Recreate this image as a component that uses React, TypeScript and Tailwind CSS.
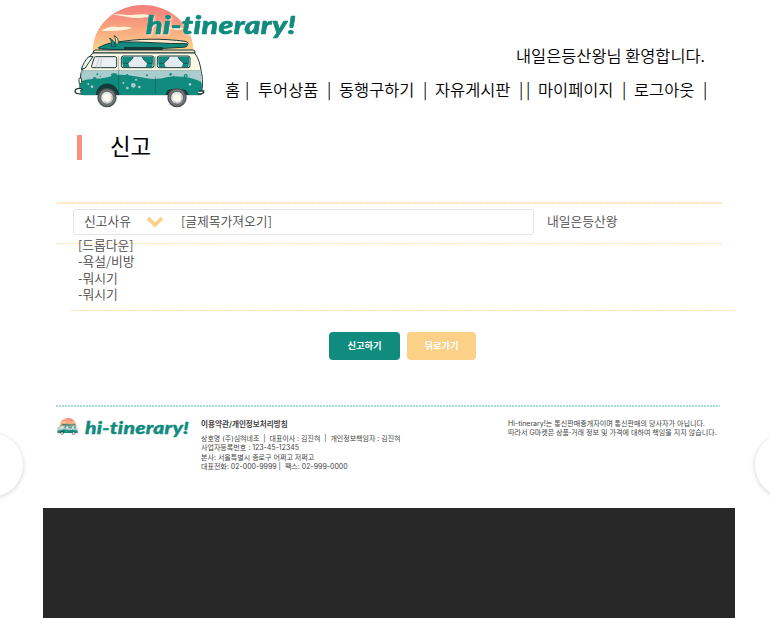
import type { ReactNode } from "react";

function Van({ className }: { className: string }) {
  return (
    <svg className={className} viewBox="0 0 420 336" aria-hidden="true">
      <defs>
        <linearGradient id="sunset" x1="0" y1="0" x2="0" y2="1">
          <stop offset="0" stopColor="#f47c7c" />
          <stop offset="0.5" stopColor="#f8a480" />
          <stop offset="1" stopColor="#fcd48a" />
        </linearGradient>
      </defs>
      <path d="M68 152a151 137 0 0 1 302 0z" fill="url(#sunset)" />
      <path d="M128 43c20-4 38 4 58 2s38-4 56 3c-24 8-50 7-72 3-14-3-28-4-42-8zM92 92c18-8 30-14 46-12 18 2 30-2 48 4-28 10-60 10-94 8zM290 82c18 2 36-2 52 4-14 6-40 4-52-4z" fill="#fff3d6" />
      <path d="M140 127c60-12 140-12 205-3 14 3 11 12-4 14-80 5-140 5-201 0z" fill="#fae8c8" stroke="#173b3a" strokeWidth="3" />
      <path d="M85 143c24-12 44-17 70-17 62-2 132 6 195 5 6 7-2 11-14 11-80 5-180 10-249 4z" fill="#108b7e" stroke="#173b3a" strokeWidth="3" />
      <path d="M132 107c10 3 14 13 13 24l-8 2c1-10 0-18-5-26z" fill="#fae8c8" stroke="#173b3a" strokeWidth="2.5" />
      <path d="M118 114c12 4 17 15 19 26h-13c2-10 0-18-6-26z" fill="#108b7e" stroke="#173b3a" strokeWidth="2" />
      <rect x="162" y="141" width="116" height="10" fill="#173b3a" />
      <path d="M76 150H370q6 0 5 9H69q1-9 7-9z" fill="#f6e2c3" stroke="#173b3a" strokeWidth="3" />
      <path d="M69 159H374c12 16 17 36 19 52 6 24 6 50 0 73H38c-9-8-10-27-7-47 0-14 4-25 7-33 6-16 17-31 31-45z" fill="#fff8e7" stroke="#173b3a" strokeWidth="3" />
      <path d="M34 211H392l2 31-4 12H32z" fill="#a9cdcd" />
      <path d="M30 246c22-14 52-5 88-16 31-10 50-5 86 0 29 5 44 10 76 4 41-9 80-3 114 11 4 14 2 28-2 40H38c-7-8-9-22-8-39z" fill="#108b7e" />
      <path d="M34 211H393" stroke="#173b3a" strokeWidth="1.5" opacity=".4" />
      <path d="M56 170c-10 10-18 24-22 38l12-4c6-10 14-21 23-34zM76 170h60q4 0 4 5v22q0 6-6 6H68q-5 0-3-6l7-22q1-5 4-5z" fill="#edf0f2" stroke="#173b3a" strokeWidth="3" />
      <path d="m88 172-9 30m16-30-4 30" stroke="#d2d7dd" strokeWidth="5" />
      {[154, 262].map((x) => (
        <g key={x} transform={`translate(${x} 168)`}>
          <rect width="98" height="35" rx="6" fill="#e4eaf1" stroke="#173b3a" strokeWidth="3" />
          <path d="M3 2h33c-3 10-11 14-16 19l5 12H5q-4-14-2-31zM95 2H62c3 10 11 14 16 19l-5 12h20q4-14 2-31z" fill="#108b7e" />
          <path d="M36 2c-3 10-11 14-16 19M62 2c3 10 11 14 16 19M6 22h15m56 0h15" fill="none" stroke="#173b3a" strokeWidth="2" />
        </g>
      ))}
      <path d="M146 168v114M256 168v38m0 24v50M42 204c-8 11-9 22-10 34" fill="none" stroke="#173b3a" strokeWidth="2" opacity=".5" />
      <g fill="#108b7e">
        <circle cx="74" cy="237" r="6" /><ellipse cx="132" cy="224" rx="9" ry="5" />
        <circle cx="171" cy="226" r="4" /><circle cx="302" cy="223" r="4" />
        <circle cx="311" cy="230" r="3" /><circle cx="347" cy="228" r="6" />
        <circle cx="82" cy="223" r="3" /><circle cx="91" cy="229" r="2" /><circle cx="231" cy="226" r="3" />
      </g>
      <g fill="#a9cdcd">
        <circle cx="190" cy="256" r="7" /><circle cx="172" cy="264" r="4" />
        <circle cx="208" cy="261" r="4" /><circle cx="198" cy="239" r="3" />
        <circle cx="66" cy="260" r="4" /><circle cx="55" cy="252" r="3" />
        <circle cx="360" cy="253" r="4" /><circle cx="347" cy="228" r="2" /><circle cx="160" cy="249" r="3" />
      </g>
      <path d="M78 285c2-44 62-48 70 0zM287 285c4-21 13-17 28-17h14c16 0 21 1 27 17z" fill="#173b3a" />
      <path d="M16 269c-3 9 1 13 20 13m-20-13c9-5 18-4 22 1M386 273h15c1 7-2 9-17 9" fill="#fff8e7" stroke="#173b3a" strokeWidth="4" />
      <rect x="27" y="234" width="8" height="17" rx="4" fill="#fff8e7" stroke="#173b3a" strokeWidth="3" />
      {[111, 321].map((x) => (
        <g key={x}>
          <circle cx={x} cy="293" r="27" fill="#777879" stroke="#4b5051" strokeWidth="4" />
          <circle cx={x} cy="293" r="19" fill="#e1e3e5" stroke="#394446" strokeWidth="2" />
          <circle cx={x} cy="293" r="12" fill="#fffaf0" />
          <path d={`M${x - 9} 304a14 14 0 0 0 22-17`} fill="none" stroke="#bdc1c5" strokeWidth="4" />
        </g>
      ))}
    </svg>
  );
}

function Wordmark({ className }: { className: string }) {
  return (
    <svg className={className} viewBox="0 0 156 36">
      <text x="3" y="26.5" textLength="150" lengthAdjust="spacingAndGlyphs" className="fill-[#108b7e] stroke-[#108b7e] font-['Lato'] text-[25.5px] font-black italic tracking-[0.3px] [font-variant-ligatures:none] [stroke-linejoin:round] [stroke-width:.6px]">
        hi-tinerary!
      </text>
    </svg>
  );
}

function Bit({ className, children }: { className: string; children: ReactNode }) {
  return <span className={`block shrink-0 whitespace-pre ${className}`}>{children}</span>;
}

export default function App() {
  return (
    <div className="relative h-[618px] w-[770px] overflow-hidden bg-white font-['Noto_Sans_CJK_KR',sans-serif] text-black">
      <header className="relative flex h-28 pl-[70px]">
        <Van className="h-28 w-[140px] shrink-0" />
        <Wordmark className="absolute left-[143px] top-[7px] h-9 w-[156px] drop-shadow-[1px_1px_1px_rgba(255,255,255,0.8)]" />
        <div className="flex flex-col pl-[15px] pt-[43px] font-[350]">
          <p className="pl-[291px] text-[16.4px] leading-6 whitespace-nowrap">내일은등산왕님 환영합니다.</p>
          <nav className="mt-[10px] flex text-[16.4px] leading-6">
            <Bit className="w-5">홈</Bit><Bit className="w-[13px]">|</Bit>
            <Bit className="w-[69px]">투어상품</Bit><Bit className="w-[12px]">|</Bit>
            <Bit className="w-[84px]">동행구하기</Bit><Bit className="w-[12px]">|</Bit>
            <Bit className="w-[84px]">자유게시판</Bit><Bit className="w-[7px]">|</Bit><Bit className="w-[12px]">|</Bit>
            <Bit className="w-[84px]">마이페이지</Bit><Bit className="w-[12px]">|</Bit>
            <Bit className="w-[69px]">로그아웃</Bit><Bit className="w-2">|</Bit>
          </nav>
        </div>
      </header>

      <main className="h-[293px] text-[#4a4a4a]">
        <div className="flex h-[90px] pl-[77px] pt-[19px]">
          <div className="mt-1 h-[25px] w-[5px] bg-[#f88f80]" />
          <h1 className="pl-7 text-[22.4px] font-normal leading-7 text-black">신고</h1>
        </div>
        <div className="ml-[57px] w-[665px]">
          <div className="h-[2px] bg-[repeating-linear-gradient(90deg,#fde5b8_0_2px,#fff5e3_2px_3px)]" />
          <div className="flex h-[39px] pl-4 pt-[5px] text-[12.8px] font-[350] leading-[22px]">
            <div className="flex h-[26px] w-[461px] rounded-[3px] border border-[#e4e4e4] pl-[10px]">
              <Bit className="w-[63px]">신고사유</Bit>
              <svg className="mt-[7px] h-[10px] w-4" viewBox="0 0 16 10"><path d="m1 1 7 7 7-7" fill="none" stroke="#fbd187" strokeWidth="3.8" /></svg>
              <Bit className="pl-[18px]">[글제목가져오기]</Bit>
            </div>
            <span className="pl-[13px] pt-px">내일은등산왕</span>
          </div>
          <div className="h-px bg-[repeating-linear-gradient(90deg,#fde7bb_0_2px,#fff5e3_2px_3px)]" />
        </div>
        <div className="ml-[71px] h-[66px] w-[664px] pl-[7px] text-[12.8px] font-[350] leading-[16.3px]">
          <p className="-mt-[7px]">[드롭다운]</p>
          <p>-욕설/비방</p>
          <p>-뭐시기</p>
          <p>-뭐시기</p>
        </div>
        <div className="ml-[71px] mt-[7px] h-px w-[664px] bg-[repeating-linear-gradient(90deg,#fde3b0_0_2px,#fef2d9_2px_3px)]" />
        <div className="flex gap-2 pl-[329px] pt-[21px] text-[9.3px] font-bold leading-[26px] text-white">
          <button className="h-7 w-[71px] rounded-[4px] bg-[#108b7e] pb-[2px]">신고하기</button>
          <button className="-ml-px h-7 w-[69px] rounded-[4px] bg-[#fbd187] pb-[2px]">뒤로가기</button>
        </div>
      </main>

      <footer className="ml-[56px] h-[103px] w-[664px] font-[Inter,'Noto_Sans_CJK_KR',sans-serif] text-[#444]">
        <div className="h-[2px] bg-[repeating-linear-gradient(90deg,#addbd5_0_2px,#e8f6f4_2px_3px)]" />
        <div className="flex">
          <div className="flex w-[136px] pt-[9px]">
            <Van className="h-[21px] w-[23px]" />
            <Wordmark className="ml-[3px] h-[25px] w-[110px]" />
          </div>
          <div className="w-[316px] pl-[9px] pt-[13px] text-[7.02px] leading-[9.2px] whitespace-nowrap">
            <p className="mb-[5px] text-[7.6px] font-bold">이용약관/개인정보처리방침</p>
            <p className="text-[6.98px]">상호명 (주)심혀네조 &nbsp;|&nbsp; 대표이사 : 김진혀 &nbsp;|&nbsp; 개인정보책임자 : 김진혀</p>
            <p>사업자등록번호 : 123-45-12345</p>
            <p>본사: 서울특별시 종로구 어쩌고 저쩌고</p>
            <p>대표전화: 02-000-9999 |&nbsp; 팩스: 02-999-0000</p>
          </div>
          <div className="pt-[12px] text-[7.05px] leading-[9.2px] whitespace-nowrap">
            <p>Hi-tinerary!는 통신판매중개자이며 통신판매의 당사자가 아닙니다.</p>
            <p>따라서 G마켓은 상품·거래 정보 및 가격에 대하여 책임을 지지 않습니다.</p>
          </div>
        </div>
      </footer>
      <div className="ml-[43px] h-[110px] w-[692px] bg-[#282828]" />
      <div className="absolute -left-[41px] top-[433px] size-16 rounded-full bg-white shadow-[0_1px_5px_rgba(0,0,0,0.18)]" />
      <div className="absolute left-[755px] top-[433px] size-16 rounded-full bg-white shadow-[0_1px_5px_rgba(0,0,0,0.18)]" />
    </div>
  );
}
